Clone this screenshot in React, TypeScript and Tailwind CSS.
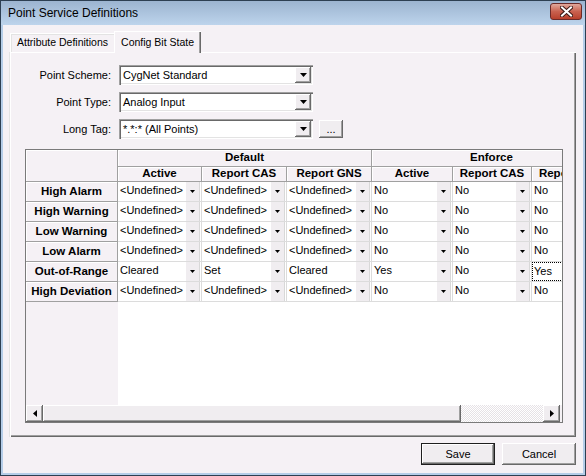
import clsx from 'clsx'

const U = '<Undefined>'

const rows = [
  { name: 'High Alarm', cells: [U, U, U, 'No', 'No', 'No'] },
  { name: 'High Warning', cells: [U, U, U, 'No', 'No', 'No'] },
  { name: 'Low Warning', cells: [U, U, U, 'No', 'No', 'No'] },
  { name: 'Low Alarm', cells: [U, U, U, 'No', 'No', 'No'] },
  { name: 'Out-of-Range', cells: ['Cleared', 'Set', 'Cleared', 'Yes', 'No', 'Yes'] },
  { name: 'High Deviation', cells: [U, U, U, 'No', 'No', 'No'] },
]

const columns = [
  { name: 'Active', width: 'w-[84px]' },
  { name: 'Report CAS', width: 'w-[85px]' },
  { name: 'Report GNS', width: 'w-[85px]' },
  { name: 'Active', width: 'w-[81px]' },
  { name: 'Report CAS', width: 'w-[79px]' },
  { name: 'Report GNS', width: 'w-[80px]' },
]

const raised =
  'bg-[#f0edf0] shadow-[inset_-1px_-1px_0_#696969,inset_1px_1px_0_#ffffff,inset_-2px_-2px_0_#a0a0a0]'

function SmallArrow() {
  return (
    <svg width="5" height="3" viewBox="0 0 5 3">
      <polygon points="0,0 5,0 2.5,3" fill="#000" />
    </svg>
  )
}

function ComboBox({ value }: { value: string }) {
  return (
    <div className="flex h-[20px] w-[194px] bg-white p-[2px] shadow-[inset_1px_1px_0_#a0a0a0,inset_2px_2px_0_#696969,inset_-1px_-1px_0_#ffffff,inset_-2px_-2px_0_#e3e3e3]">
      <span className="flex-1 pl-[2px] leading-[16px] whitespace-nowrap">{value}</span>
      <span className={clsx('flex w-[16px] items-center justify-center', raised)}>
        <svg width="7" height="4" viewBox="0 0 7 4">
          <polygon points="0,0 7,0 3.5,4" fill="#000" />
        </svg>
      </span>
    </div>
  )
}

function GridCell({ value, width, focus }: { value: string; width: string; focus?: boolean }) {
  return (
    <div className={clsx('flex h-full shrink-0 border-r border-[#dcdcdc] bg-white', width)}>
      <span
        className={clsx(
          'flex-1 overflow-hidden pl-[2px] leading-[17px] whitespace-nowrap',
          focus && 'border border-dotted border-black pl-px'
        )}
      >
        {value}
      </span>
      <span className="mr-px flex w-[15px] shrink-0 items-center justify-center bg-[#f0edf0] shadow-[inset_1px_0_0_#ffffff,inset_-1px_0_0_#d8d8d8]">
        <SmallArrow />
      </span>
    </div>
  )
}

function HeaderCell({ children, className }: { children?: React.ReactNode; className?: string }) {
  return (
    <div
      className={clsx(
        'flex shrink-0 items-center justify-center border-r border-b border-[#a0a0a0] bg-[#f5f1f5] font-bold whitespace-nowrap shadow-[inset_1px_1px_0_#ffffff]',
        className
      )}
    >
      {children}
    </div>
  )
}

export default function App() {
  return (
    <div className="flex h-[476px] w-[586px] flex-col bg-[#2d3f52] p-px font-['Liberation_Sans',Arial,sans-serif] text-[11px] text-black">
      {/* Title bar */}
      <div className="flex h-[24px] shrink-0 items-center justify-between bg-gradient-to-b from-[#9cb4d0] to-[#bdd4ec] pr-[3px] pl-[7px]">
        <span className="text-[12px]">Point Service Definitions</span>
        <div className="mb-[3px] flex h-[17px] w-[32px] items-center justify-center rounded-[3px] border border-[#6b2a28] bg-gradient-to-b from-[#e0a89c] via-[#c9614f] to-[#b8402c]">
          <svg width="13" height="11" viewBox="0 0 13 11">
            <path d="M2 1.5 L11 9.5 M11 1.5 L2 9.5" stroke="#3b1a16" strokeWidth="4" strokeLinecap="square" />
            <path d="M2 1.5 L11 9.5 M11 1.5 L2 9.5" stroke="#ffffff" strokeWidth="2" strokeLinecap="square" />
          </svg>
        </div>
      </div>

      {/* Frame + client */}
      <div className="flex flex-1 bg-[#b5cde8] px-[2px] pb-[2px]">
        <div className="flex flex-1 flex-col bg-[#f5f1f5] px-[7px] pt-[6px] pb-[8px]">
          {/* Tabs */}
          <div className="flex h-[21px] items-end">
            <div className="flex h-[19px] items-center border-t border-l border-[#ffffff] px-[6px] text-[10.5px] shadow-[inset_1px_1px_0_#e3e3e3]">
              Attribute Definitions
            </div>
            <div className="relative z-10 -mb-px flex h-[22px] items-center border-t border-l border-[#ffffff] bg-[#f5f1f5] pr-[7px] pl-[6px] text-[10.5px] shadow-[inset_-1px_0_0_#696969,inset_-2px_0_0_#a0a0a0]">
              Config Bit State
            </div>
          </div>

          {/* Tab panel */}
          <div className="flex h-[385px] flex-col border-t border-l border-[#ffffff] pt-[12px] pr-[2px] pb-[14px] pl-[14px] shadow-[inset_-1px_-1px_0_#696969,inset_-2px_-2px_0_#a0a0a0,-1px_0_0_#e3e3e3]">
            {/* Form */}
            <div className="flex flex-col gap-[7px]">
              <div className="flex h-[20px] items-center">
                <span className="w-[86px] text-right">Point Scheme:</span>
                <span className="w-[8px]" />
                <ComboBox value="CygNet Standard" />
              </div>
              <div className="flex h-[20px] items-center">
                <span className="w-[86px] text-right">Point Type:</span>
                <span className="w-[8px]" />
                <ComboBox value="Analog Input" />
              </div>
              <div className="flex h-[20px] items-center">
                <span className="w-[86px] text-right">Long Tag:</span>
                <span className="w-[8px]" />
                <ComboBox value="*.*:* (All Points)" />
                <button className={clsx('ml-[6px] h-[18px] w-[24px] leading-[14px]', raised)}>...</button>
              </div>
            </div>

            {/* Grid */}
            <div className="mt-[10px] flex h-[274px] w-[538px] flex-col border border-[#7a7a7a]">
              <div className="flex flex-1 overflow-hidden">
                {/* Row headers */}
                <div className="flex w-[92px] shrink-0 flex-col bg-[#f5f1f5]">
                  <HeaderCell className="h-[32px] w-full" />
                  {rows.map((r) => (
                    <HeaderCell key={r.name} className="h-[20px] w-full text-[11.5px]">
                      {r.name}
                    </HeaderCell>
                  ))}
                </div>

                {/* Data area */}
                <div className="flex flex-1 flex-col overflow-hidden bg-white">
                  <div className="flex h-[17px] shrink-0">
                    <HeaderCell className="w-[254px] text-[11.5px]">Default</HeaderCell>
                    <HeaderCell className="w-[240px] text-[11.5px]">Enforce</HeaderCell>
                  </div>
                  <div className="flex h-[15px] shrink-0">
                    {columns.map((c, i) => (
                      <HeaderCell key={i} className={clsx(c.width, 'text-[11.5px]')}>
                        {c.name}
                      </HeaderCell>
                    ))}
                  </div>
                  {rows.map((r) => (
                    <div key={r.name} className="flex h-[20px] shrink-0 border-b border-[#dcdcdc]">
                      {r.cells.map((v, i) => (
                        <GridCell
                          key={i}
                          value={v}
                          width={columns[i].width}
                          focus={r.name === 'Out-of-Range' && i === 5}
                        />
                      ))}
                    </div>
                  ))}
                </div>
              </div>

              {/* Horizontal scrollbar */}
              <div className="flex h-[17px] shrink-0 bg-[#f5f1f5] pr-[2px]">
                <div className={clsx('flex w-[17px] items-center justify-center', raised)}>
                  <svg width="4" height="7" viewBox="0 0 4 7">
                    <polygon points="4,0 4,7 0,3.5" fill="#000" />
                  </svg>
                </div>
                <div className={clsx('w-[418px]', raised)} />
                <div className="flex-1 [background-image:repeating-conic-gradient(#e6e2e6_0%_25%,#ffffff_0%_50%)] [background-size:2px_2px]" />
                <div className={clsx('flex w-[17px] items-center justify-center', raised)}>
                  <svg width="4" height="7" viewBox="0 0 4 7">
                    <polygon points="0,0 0,7 4,3.5" fill="#000" />
                  </svg>
                </div>
              </div>
            </div>
          </div>

          {/* Buttons */}
          <div className="mt-[6px] flex justify-end gap-[7px]">
            <button className="h-[22px] w-[74px] border border-[#1e1e1e] bg-[#f0edf0] shadow-[inset_-1px_-1px_0_#696969,inset_1px_1px_0_#ffffff,inset_-2px_-2px_0_#a0a0a0]">
              Save
            </button>
            <button className={clsx('h-[22px] w-[74px]', raised)}>Cancel</button>
          </div>
        </div>
      </div>
    </div>
  )
}
